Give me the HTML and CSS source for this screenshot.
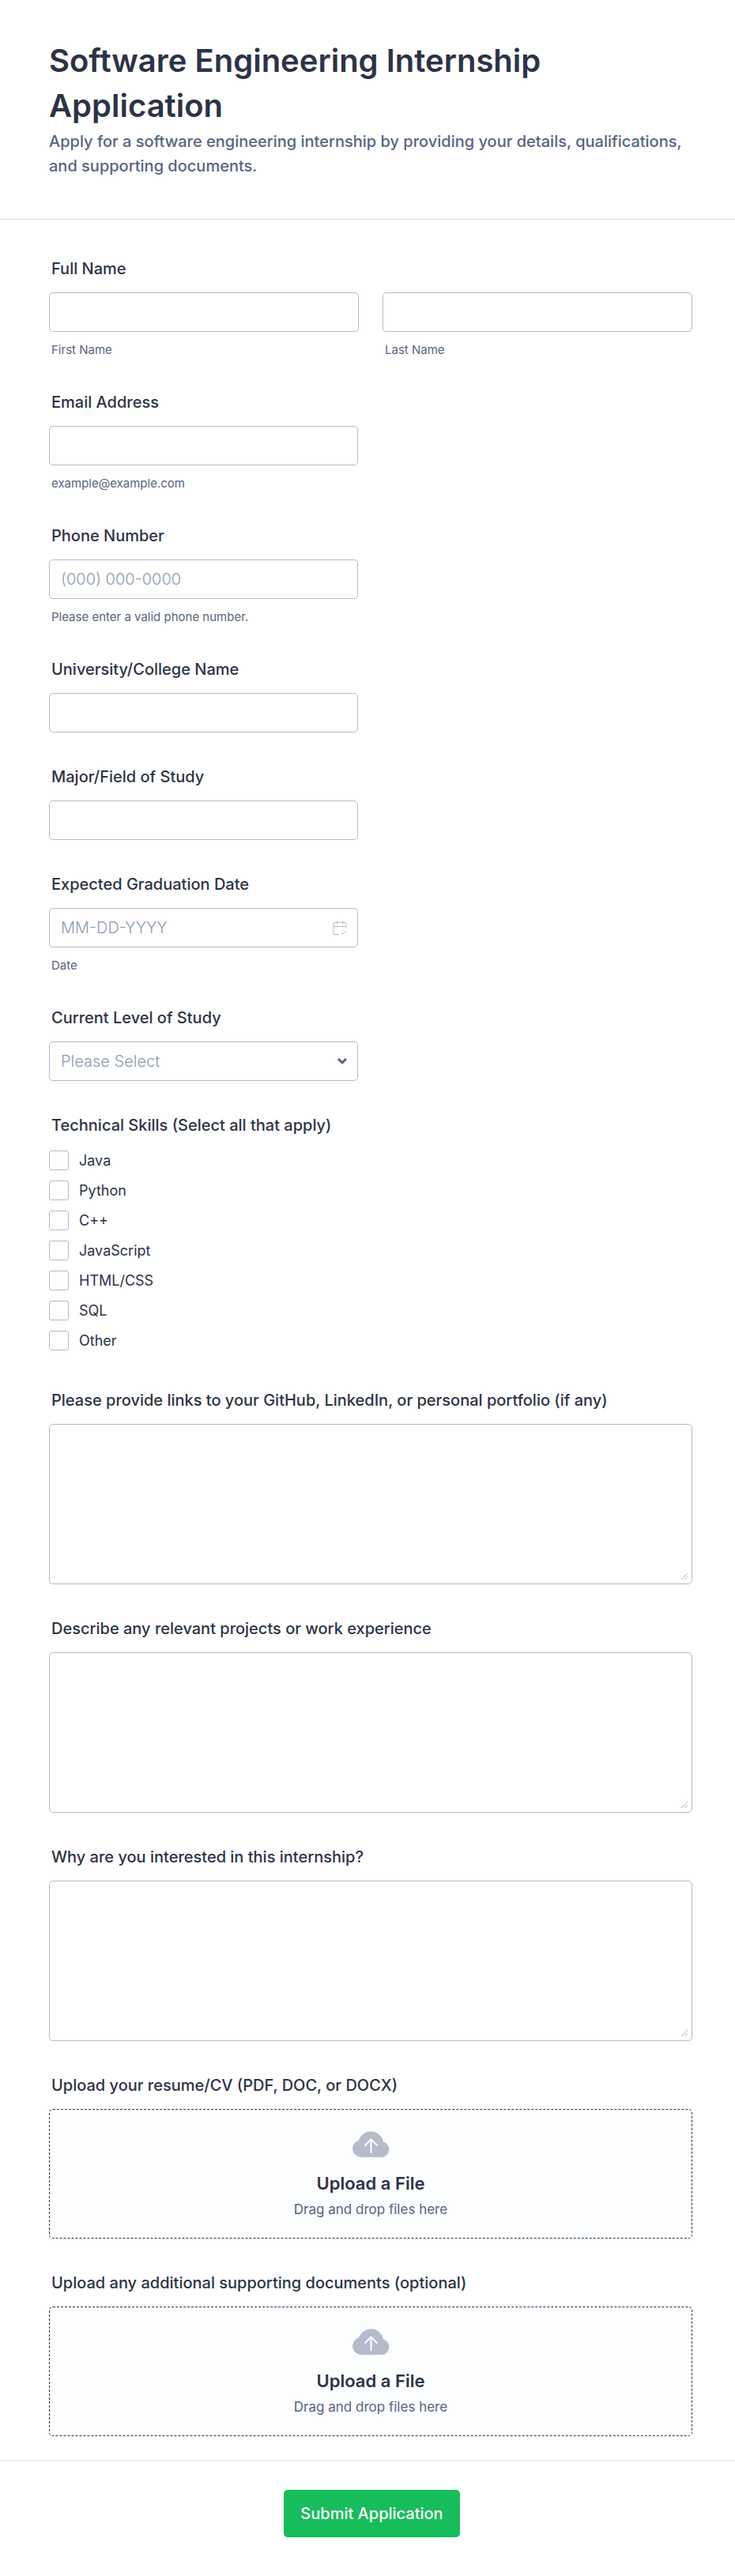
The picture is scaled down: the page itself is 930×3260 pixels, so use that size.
FILE: index.html
```html
<!DOCTYPE html>
<html lang="en">
<head>
<meta charset="utf-8">
<meta name="viewport" content="width=device-width, initial-scale=1">
<title>Software Engineering Internship Application</title>
<link rel="stylesheet" href="styles.css">
</head>
<body>
<form class="form">
  <header class="form-header">
    <h1 class="title">Software Engineering Internship Application</h1>
    <p class="subtitle">Apply for a software engineering internship by providing your details, qualifications, and supporting documents.</p>
  </header>

  <div class="fields">
    <fieldset class="field">
      <legend class="label">Full Name</legend>
      <div class="name-row">
        <div class="name-part">
          <input class="control" type="text" id="first-name">
          <label class="hint" for="first-name">First Name</label>
        </div>
        <div class="name-part">
          <input class="control" type="text" id="last-name">
          <label class="hint" for="last-name">Last Name</label>
        </div>
      </div>
    </fieldset>

    <div class="field">
      <label class="label" for="email">Email Address</label>
      <input class="control half" type="email" id="email" aria-describedby="email-hint">
      <span class="hint" id="email-hint">example@example.com</span>
    </div>

    <div class="field">
      <label class="label" for="phone">Phone Number</label>
      <input class="control half" type="tel" id="phone" placeholder="(000) 000-0000" aria-describedby="phone-hint">
      <span class="hint" id="phone-hint">Please enter a valid phone number.</span>
    </div>

    <div class="field">
      <label class="label" for="university">University/College Name</label>
      <input class="control half" type="text" id="university">
    </div>

    <div class="field">
      <label class="label" for="major">Major/Field of Study</label>
      <input class="control half" type="text" id="major">
    </div>

    <div class="field">
      <label class="label" for="graduation">Expected Graduation Date</label>
      <div class="with-icon half">
        <input class="control" type="text" id="graduation" placeholder="MM-DD-YYYY" aria-describedby="date-hint">
        <svg class="icon calendar" viewBox="0 0 18 19" aria-hidden="true"><path d="M8 17.700H3a2 2 0 0 1-2-2V4.200a2 2 0 0 1 2-2h12a2 2 0 0 1 2 2V10M1 7.500h16M5.500.5v4M12.500.5v4M10.500 15l2.500 2.200 4-4"/></svg>
      </div>
      <span class="hint" id="date-hint">Date</span>
    </div>

    <div class="field">
      <label class="label" for="level">Current Level of Study</label>
      <div class="with-icon half">
        <select class="control select" id="level">
          <option>Please Select</option>
          <option>Undergraduate</option>
          <option>Graduate</option>
        </select>
        <svg class="icon chevron" viewBox="0 0 14 10" aria-hidden="true"><path d="M2 2l5 5 5-5"/></svg>
      </div>
    </div>

    <fieldset class="field">
      <legend class="label">Technical Skills (Select all that apply)</legend>
      <div class="checks">
        <label class="check"><input class="box" type="checkbox">Java</label>
        <label class="check"><input class="box" type="checkbox">Python</label>
        <label class="check"><input class="box" type="checkbox">C++</label>
        <label class="check"><input class="box" type="checkbox">JavaScript</label>
        <label class="check"><input class="box" type="checkbox">HTML/CSS</label>
        <label class="check"><input class="box" type="checkbox">SQL</label>
        <label class="check"><input class="box" type="checkbox">Other</label>
      </div>
    </fieldset>

    <div class="field">
      <label class="label" for="links">Please provide links to your GitHub, LinkedIn, or personal portfolio (if any)</label>
      <textarea class="control area" id="links"></textarea>
    </div>

    <div class="field">
      <label class="label" for="projects">Describe any relevant projects or work experience</label>
      <textarea class="control area" id="projects"></textarea>
    </div>

    <div class="field">
      <label class="label" for="interest">Why are you interested in this internship?</label>
      <textarea class="control area" id="interest"></textarea>
    </div>

    <div class="field">
      <span class="label" id="resume-label">Upload your resume/CV (PDF, DOC, or DOCX)</span>
      <button class="upload" type="button" aria-labelledby="resume-label">
        <svg class="cloud" viewBox="0 0 49 33" aria-hidden="true"><path class="cloud-shape" d="M11 33a11 11 0 0 1-2-21.500A16 16 0 0 1 40 13.500 10 10 0 0 1 39 33z"/><path class="cloud-arrow" d="M24.500 28V10.500M16.500 18.500l8-8 8 8"/></svg>
        <span class="upload-title">Upload a File</span>
        <span class="upload-text">Drag and drop files here</span>
      </button>
    </div>

    <div class="field">
      <span class="label" id="docs-label">Upload any additional supporting documents (optional)</span>
      <button class="upload" type="button" aria-labelledby="docs-label">
        <svg class="cloud" viewBox="0 0 49 33" aria-hidden="true"><path class="cloud-shape" d="M11 33a11 11 0 0 1-2-21.500A16 16 0 0 1 40 13.500 10 10 0 0 1 39 33z"/><path class="cloud-arrow" d="M24.500 28V10.500M16.500 18.500l8-8 8 8"/></svg>
        <span class="upload-title">Upload a File</span>
        <span class="upload-text">Drag and drop files here</span>
      </button>
    </div>
  </div>

  <footer class="form-footer">
    <button class="submit" type="submit">Submit Application</button>
  </footer>
</form>
</body>
</html>
```
FILE: styles.css
```css
* {
  box-sizing: border-box;
}

body {
  margin: 0;
  background: #fff;
  color: #2c3345;
  font-family: Inter, "Liberation Sans", sans-serif;
  font-size: 20px;
}

.form-header {
  padding: 48px 54px 51px 62px;
  border-bottom: 1px solid #d0d6e2;
}

.title {
  margin: 0 0 2px;
  font-size: 40px;
  font-weight: 600;
  line-height: 57px;
}

.subtitle {
  margin: 0;
  color: #57647e;
  font-weight: 500;
  line-height: 31px;
}

.fields {
  display: flex;
  flex-direction: column;
  gap: 44px;
  padding: 50px 54px 30px 62px;
}

.field {
  display: flex;
  flex-direction: column;
  min-width: 0;
  margin: 0;
  padding: 0;
  border: 0;
}

.label {
  margin-bottom: 17px;
  padding: 0 3px;
  font-weight: 500;
  line-height: 25px;
}

.name-row {
  display: flex;
  gap: 30px;
}

.name-part {
  display: flex;
  flex: 1;
  flex-direction: column;
}

.control {
  width: 100%;
  height: 50px;
  padding: 0 14px;
  border: 1px solid #b4bacb;
  border-radius: 5px;
  background: #fff;
  color: #2c3345;
  font: inherit;
}

.control::placeholder {
  color: #8d9bb0;
  font-weight: 300;
  opacity: 1;
}

.half {
  width: 48%;
}

.select {
  appearance: none;
  color: #8d9bb0;
  font-weight: 300;
}

.area {
  display: block;
  height: 203px;
  padding: 12px 14px;
  resize: vertical;
}

.area::-webkit-resizer {
  background: url("data:image/svg+xml,%3Csvg xmlns='http://www.w3.org/2000/svg' width='15' height='15'%3E%3Cpath d='M2 10l8-8M6 10l4-4' fill='none' stroke='%23b4bacb'/%3E%3C/svg%3E") no-repeat;
}

.hint {
  margin-top: 13px;
  padding: 0 3px;
  color: #57647e;
  font-size: 15px;
  line-height: 20px;
}

.with-icon {
  display: grid;
  align-items: center;
}

.with-icon > * {
  grid-area: 1 / 1;
}

.icon {
  justify-self: end;
  fill: none;
  pointer-events: none;
}

.calendar {
  width: 18px;
  height: 19px;
  margin-right: 14px;
  stroke: #b4bacb;
}

.chevron {
  width: 14px;
  height: 10px;
  margin-right: 13px;
  stroke: #57647e;
  stroke-width: 3;
}

.checks {
  display: grid;
  gap: 13px;
  justify-items: start;
  padding: 2px 0 7px;
}

.check {
  display: flex;
  align-items: center;
  gap: 13px;
  font-size: 18px;
  line-height: 25px;
}

.box {
  width: 25px;
  height: 25px;
  margin: 0;
  border: 1px solid #b4bacb;
  border-radius: 3px;
  background: #fff;
  appearance: none;
}

.box:checked {
  background: #2c3345;
}

.upload {
  display: flex;
  flex-direction: column;
  align-items: center;
  width: 100%;
  padding: 27px 20px 23px;
  border: 1px dashed #2c3345;
  border-radius: 5px;
  background: #fcfdff;
  color: #2c3345;
  font: inherit;
}

.cloud {
  width: 49px;
  height: 33px;
  margin-bottom: 18px;
}

.cloud-shape {
  fill: #b4bbcb;
}

.cloud-arrow {
  fill: none;
  stroke: #fff;
  stroke-width: 2;
}

.upload-title {
  margin-bottom: 5px;
  font-size: 22px;
  font-weight: 600;
  line-height: 30px;
}

.upload-text {
  color: #57647e;
  font-size: 17px;
  line-height: 26px;
}

.form-footer {
  display: flex;
  justify-content: center;
  padding: 37px 51px 49px 62px;
  border-top: 1px solid #e3e5f0;
}

.submit {
  padding: 0 21px;
  border: 0;
  border-radius: 5px;
  background: #18bd5b;
  color: #fff;
  font: inherit;
  font-weight: 500;
  line-height: 60px;
}
```
